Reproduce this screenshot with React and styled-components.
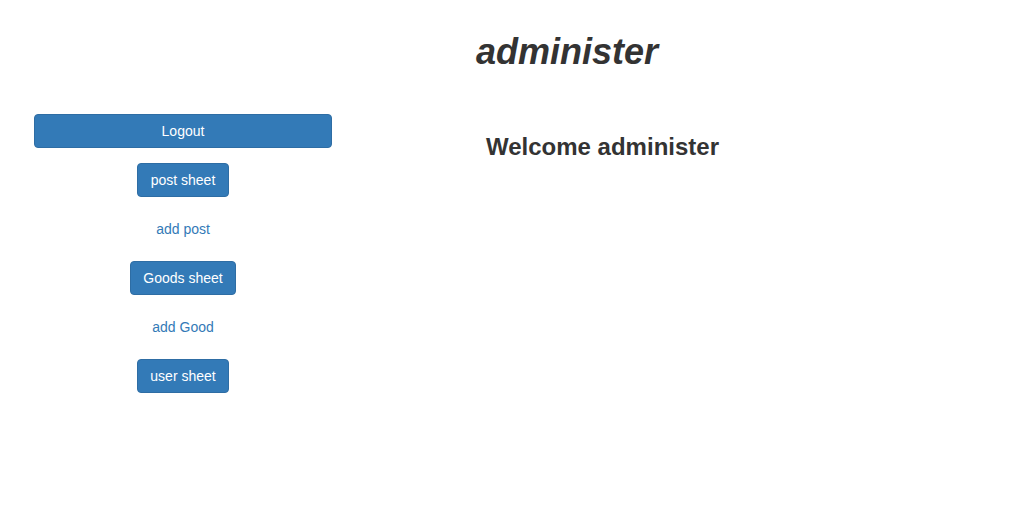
import React from "react";
import styled, { createGlobalStyle } from "styled-components";

const Global = createGlobalStyle`
  html, body { margin: 0; padding: 0; background: #fff; }
  body {
    font-family: "Liberation Sans", Arial, Helvetica, sans-serif;
    font-size: 14px;
    line-height: 1.42857;
    color: #333;
  }
  * { box-sizing: border-box; }
`;

const Page = styled.div`
  width: 1028px;
  min-height: 527px;
`;

const Header = styled.header`
  padding: 32px 0 0 106px;
  text-align: center;
`;

const Title = styled.h1`
  margin: 0;
  font-size: 36px;
  font-weight: 700;
  font-style: italic;
  line-height: 1.1;
  color: #333;
`;

const Body = styled.div`
  display: flex;
  margin-top: 42px;
`;

const Sidebar = styled.nav`
  width: 366px;
  display: flex;
  flex-direction: column;
  align-items: center;
  gap: 15px;
`;

const Button = styled.button`
  display: inline-flex;
  align-items: center;
  justify-content: center;
  height: 34px;
  padding: 0 12.5px;
  font-family: inherit;
  font-size: 14px;
  color: #fff;
  background: #337ab7;
  border: 1px solid #2e6da4;
  border-radius: 4px;
  cursor: pointer;
  ${(p) => (p.$block ? "width: 298px;" : "")}
`;

const NavLink = styled.a`
  display: inline-flex;
  align-items: center;
  height: 34px;
  padding-top: 2px;
  color: #337ab7;
  text-decoration: none;
  font-size: 14px;
`;

const Main = styled.main`
  width: 473px;
  text-align: center;
`;

const Welcome = styled.h3`
  margin: 20px 0 0;
  font-size: 24px;
  font-weight: 700;
  line-height: 1.1;
  color: #333;
`;

export default function App() {
  return (
    <Page>
      <Global />
      <Header>
        <Title>administer</Title>
      </Header>
      <Body>
        <Sidebar>
          <Button $block>Logout</Button>
          <Button>post sheet</Button>
          <NavLink href="#">add post</NavLink>
          <Button>Goods sheet</Button>
          <NavLink href="#">add Good</NavLink>
          <Button>user sheet</Button>
        </Sidebar>
        <Main>
          <Welcome>Welcome administer</Welcome>
        </Main>
      </Body>
    </Page>
  );
}
